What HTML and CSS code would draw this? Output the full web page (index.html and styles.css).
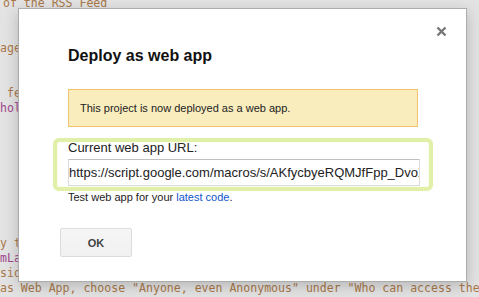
FILE: index.html
```html
<!DOCTYPE html>
<html lang="en">
<head>
    <meta charset="UTF-8">
    <meta name="viewport" content="width=device-width, initial-scale=1.0">
    <title>Deploy as web app</title>
    <link rel="stylesheet" href="styles.css">
</head>
<body>
    <!-- script editor behind the dialog (only the visible bits) -->
    <pre class="code"><span class="str first">of the RSS Feed</span>


<span class="str">age</span>


<span class="str"> fe</span>
<span class="kw">hol</span>








<span class="str">y t</span>
<span class="kw">mLa</span>
<span class="str">sio</span>
<span class="str">as Web App, choose "Anyone, even Anonymous" under "Who can access the</span></pre>

    <div class="dialog">
        <button class="close" title="Close">
            <svg width="11" height="11" viewBox="0 0 11 11">
                <path d="M1.5 1.5 L9.5 9.5 M9.5 1.5 L1.5 9.5" stroke="#777" stroke-width="2.4" fill="none"/>
            </svg>
        </button>

        <h2 class="dialog-title">Deploy as web app</h2>

        <div class="butterbar">This project is now deployed as a web app.</div>

        <div class="url-field">
            <div class="highlight"></div>
            <label for="app-url">Current web app URL:</label>
            <input type="text" id="app-url" value="https://script.google.com/macros/s/AKfycbyeRQMJfFpp_DvoXk3lWq9/exec" readonly>
        </div>

        <p class="hint">Test web app for your <a href="#">latest code</a>.</p>

        <button class="ok">OK</button>
    </div>
</body>
</html>
```

FILE: styles.css
```css
body {
    margin: 0;
    padding: 0;
    width: 479px;
    height: 297px;
    overflow: hidden;
    background-color: #e3e3e3;
    font-family: "Liberation Sans", Arial, sans-serif;
    color: #222;
}

.code {
    margin: -4px 0 0 0;
    font-family: "DejaVu Sans Mono", monospace;
    font-size: 11.55px;
    line-height: 15px;
    white-space: pre;
}

.code .first {
    padding-left: 3px;
}

.str {
    color: #a9784a;
}

.kw {
    color: #a0468f;
}

.dialog {
    position: absolute;
    left: 18px;
    top: 8px;
    width: 350px;
    padding: 37px 48px 24px 49px;
    background: #fff;
    border: 1px solid #acacac;
    box-shadow: 0 4px 14px rgba(0, 0, 0, 0.2);
}

.close {
    position: absolute;
    top: 17px;
    right: 19px;
    padding: 0;
    border: none;
    background: none;
    width: 11px;
    height: 11px;
    cursor: pointer;
}

.close svg {
    display: block;
}

.dialog-title {
    margin: 0 0 23px 0;
    font-size: 16px;
    line-height: 20px;
    font-weight: bold;
    color: #111;
}

.butterbar {
    padding: 11px 11px;
    font-size: 11px;
    line-height: 14px;
    background-color: #f9edbe;
    border: 1px solid #f0c36d;
}

.url-field {
    position: relative;
    margin-top: 13px;
}

/* green marker drawn round the url */
.highlight {
    position: absolute;
    top: -2px;
    left: -15px;
    right: -15px;
    bottom: -5px;
    border: 4px solid #e0f0a8;
    border-radius: 6px;
    box-shadow: inset 0 0 2px #eef7d2, 0 0 1px #e8f4c0;
    pointer-events: none;
}

.url-field label {
    display: block;
    font-size: 13px;
    line-height: 15px;
    margin-bottom: 4px;
}

.url-field input {
    position: relative;
    display: block;
    box-sizing: border-box;
    width: 352px;
    height: 27px;
    margin: 0;
    padding: 0;
    font-family: "Liberation Sans", Arial, sans-serif;
    font-size: 13px;
    color: #222;
    background: #fff;
    border: 1px solid #d9d9d9;
    border-top-color: #c0c0c0;
    border-radius: 1px;
    outline: none;
}

.hint {
    margin: 4px 0 0 0;
    font-size: 11px;
    line-height: 14px;
}

.hint a {
    color: #15c;
    text-decoration: none;
}

.ok {
    display: block;
    margin: 24px 0 0 -8px;
    width: 72px;
    height: 29px;
    padding: 0;
    font-family: "Liberation Sans", Arial, sans-serif;
    font-size: 11px;
    font-weight: bold;
    color: #444;
    background: linear-gradient(#f5f5f5, #f1f1f1);
    border: 1px solid #dcdcdc;
    border-radius: 2px;
    cursor: pointer;
}
```
